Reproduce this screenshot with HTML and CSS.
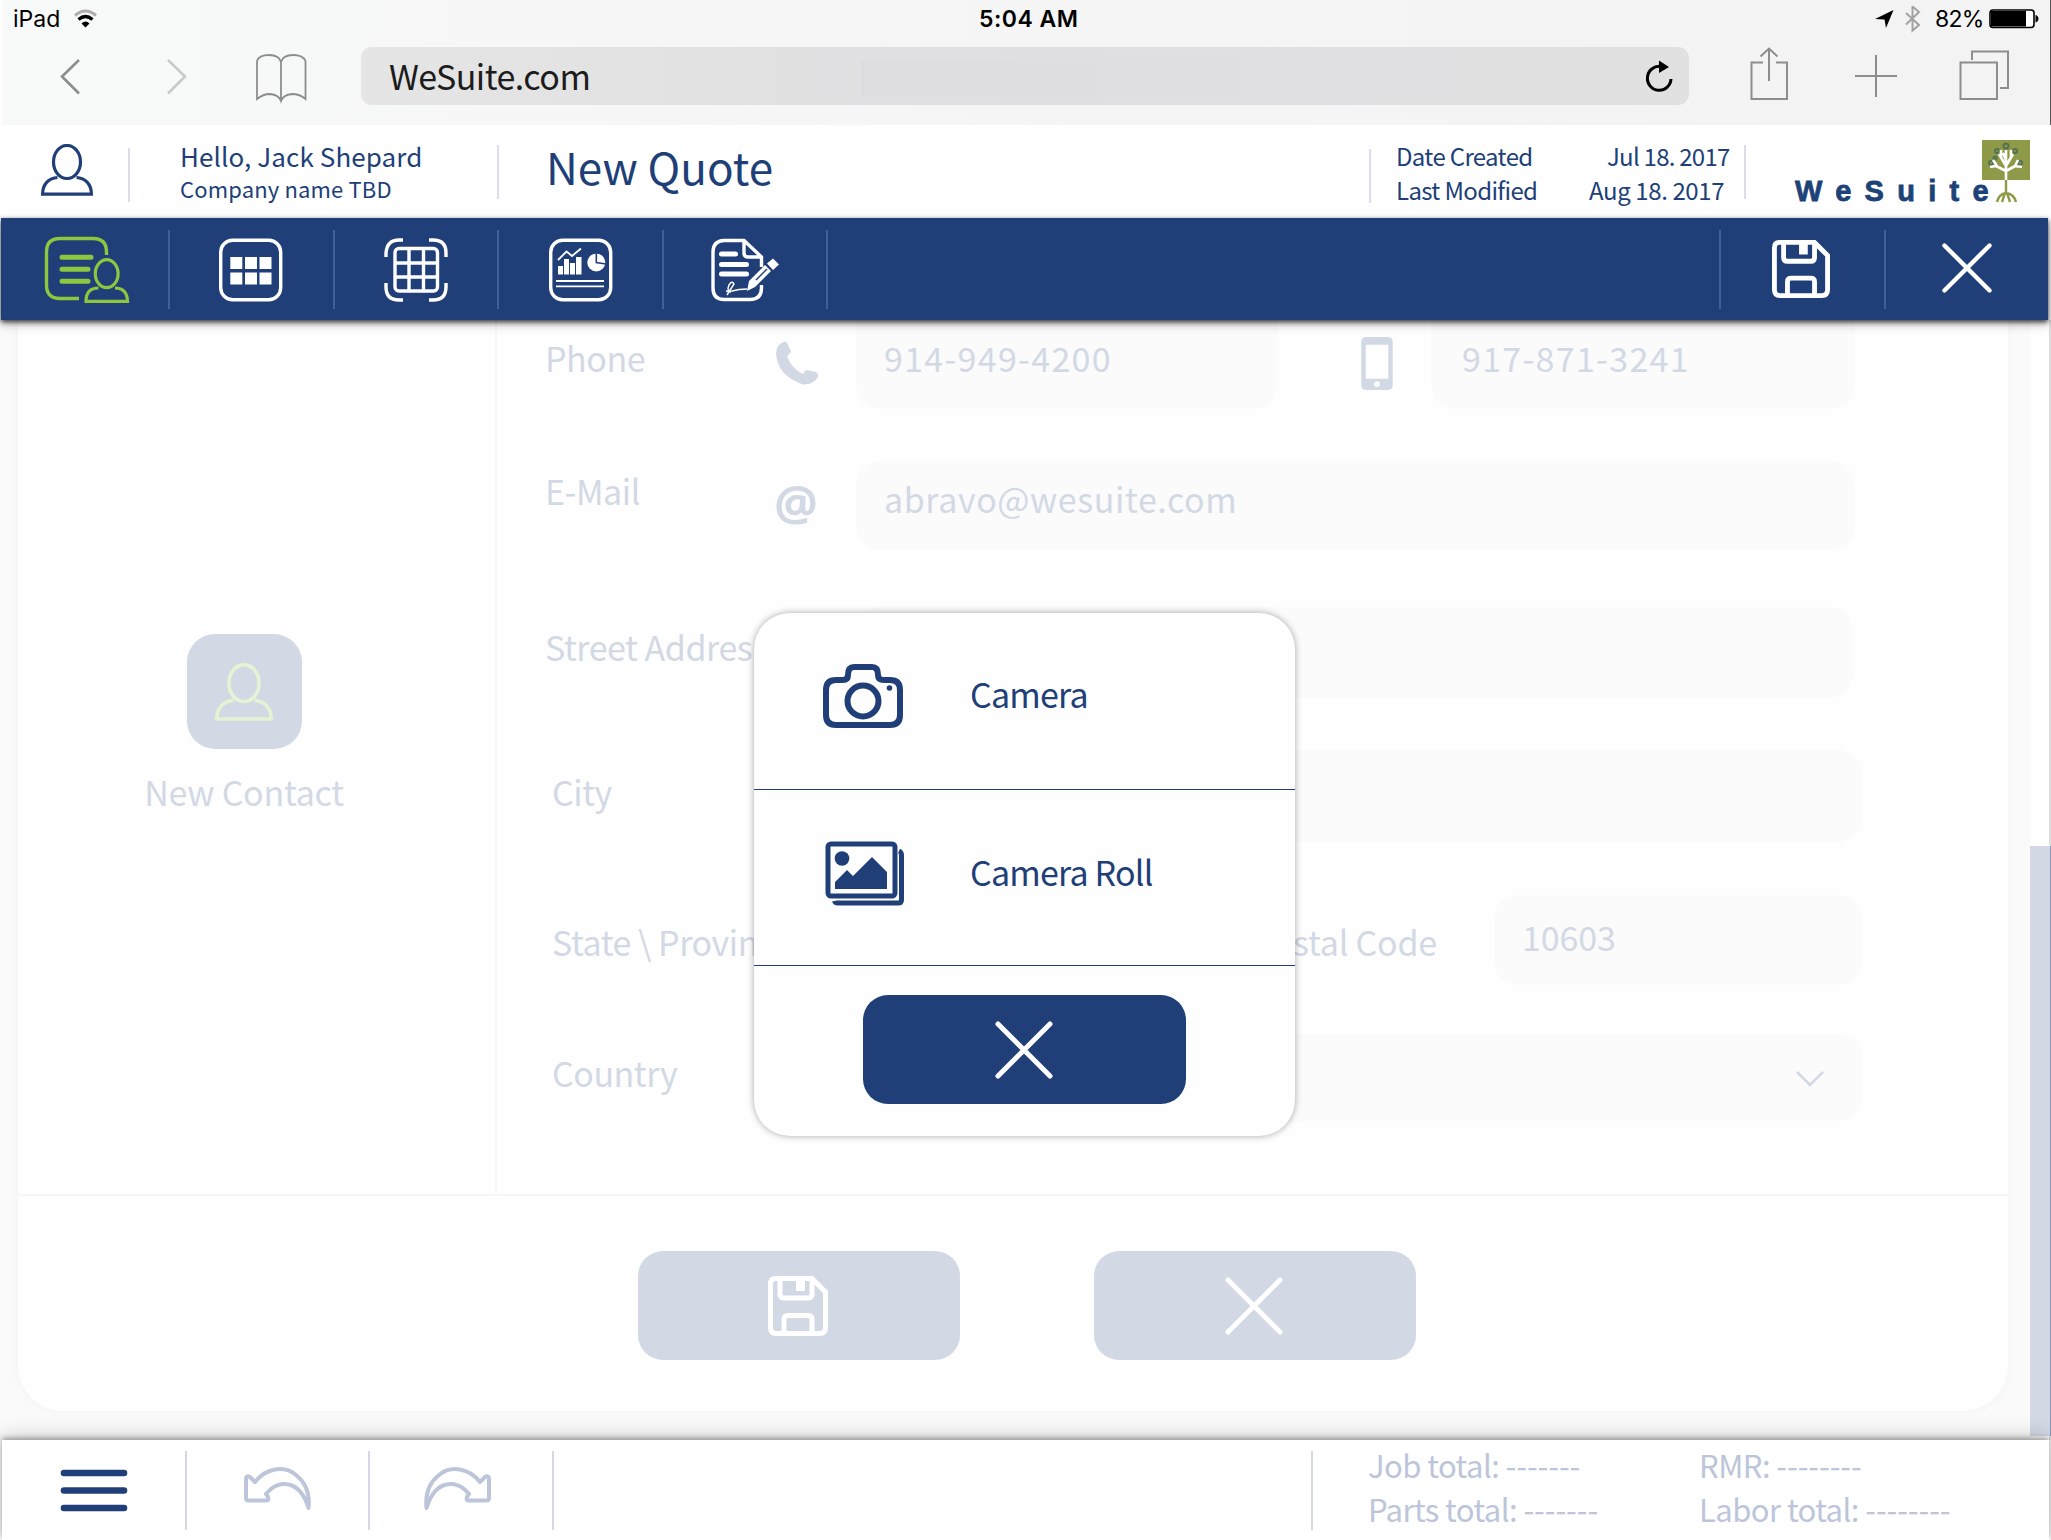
FILE: index.html
```html
<!DOCTYPE html>
<html lang="en">
<head>
<meta charset="utf-8">
<title>WeSuite - New Quote</title>
<link rel="stylesheet" href="styles.css">
</head>
<body>
<svg class="defs" width="0" height="0">
  <symbol id="person" viewBox="0 0 52 52">
    <ellipse cx="26" cy="18" rx="13.5" ry="16.5"/>
    <path d="M16.5 33.5C8 34 1.6 40 1.6 50.2H50.4C50.4 40 44 34 35.500 33.500"/>
  </symbol>
  <symbol id="save" viewBox="0 0 60 60">
    <path d="M7.500 2.500H44L57.500 16V51.500Q57.500 57.500 51.500 57.500H8.500Q2.500 57.500 2.500 51.500V8Q2.500 2.500 7.500 2.500Z"/>
    <path d="M12 3V18Q12 22 16 22H40Q44 22 44 18V3M16 57V43Q16 39.500 20 39.500H40Q44 39.500 44 43V57"/>
    <path class="solid" d="M28 4h9v11h-9z"/>
  </symbol>
  <symbol id="close" viewBox="0 0 60 60"><path d="M4 4L56 56M56 4L4 56"/></symbol>
</svg>

<header class="browser">
  <div class="status">
    <span class="device">iPad</span>
    <svg class="wifi" viewBox="73 8 25 20" width="25" height="20">
      <path d="M75 15.500Q85.500 6.500 96 15.500" stroke="#adadad" stroke-width="3" fill="none"/>
      <path d="M78.500 19.500Q85.500 13.500 92.500 19.500" stroke="#000" stroke-width="3.200" fill="none"/>
      <path d="M81.500 23.500Q85.500 19.500 89.500 23.500L85.500 27.500Z"/>
    </svg>
    <span class="clock">5:04 AM</span>
    <svg class="locate" viewBox="1874 6 48 28" width="48" height="28">
      <path d="M1875 19L1893.500 10L1886 28L1884.500 19.500Z"/>
      <path d="M1906 13L1919 25L1912.500 30.500V6.500L1919 12L1906 24.500" fill="none" stroke="#a3a3a3" stroke-width="2"/>
    </svg>
    <span class="percent">82%</span>
    <svg class="battery" viewBox="0 0 50 20" width="50" height="20">
      <rect x="1" y="1" width="44" height="17.500" rx="3" fill="#fff" stroke="#000" stroke-width="1.600"/>
      <path d="M2 2H37V17.500H2ZM46.500 6Q49.500 7 49.500 9.700T46.500 13.500Z"/>
    </svg>
  </div>
  <div class="address-row">
    <svg class="nav-icons" viewBox="58 50 252 56" width="252" height="56">
      <path d="M79 60L62 76.500L79 93.500" stroke="#8d8d8d" stroke-width="2.600"/>
      <path d="M168 60L185 76.500L168 93.500" stroke="#c9c9c9" stroke-width="2.600"/>
      <path d="M281 101V62Q279 55 269 55Q259 55 257 61V99Q263 94 270 94Q279 95 281 101Q283 95 292 94Q300 94 305.500 99V61Q303 55 293 55Q283 55 281 62" stroke="#8d8d8d" stroke-width="1.800"/>
    </svg>
    <div class="address">
      <span class="url">WeSuite.com</span>
      <span class="tint"></span>
      <svg class="reload" viewBox="1644 58 30 34" width="30" height="34">
        <path d="M1661 65.500A11.800 12 0 1 0 1671 78" fill="none" stroke="#000" stroke-width="3"/>
        <path d="M1659 59.500L1669 66L1659 72Z"/>
      </svg>
    </div>
    <svg class="tab-icons" viewBox="1748 46 264 56" width="264" height="56">
      <path d="M1763 62.500H1751.500V99H1787V62.500H1776M1769 81V49M1760.500 56.500L1769 48.500L1777.500 56.500M1855 76H1897M1876 55V97M1960.500 62.500H1997V99H1960.500ZM1972 60V51.500H2008V88H2000"/>
    </svg>
  </div>
</header>

<section class="account">
  <svg class="line-icon me"><use href="#person"/></svg>
  <i class="rule r1"></i>
  <div class="hello"><div class="name">Hello, Jack Shepard</div><div class="company">Company name TBD</div></div>
  <i class="rule r2"></i>
  <h1>New Quote</h1>
  <i class="rule r3"></i>
  <dl class="dates">
    <dt>Date Created</dt><dd class="jul">Jul 18. 2017</dd>
    <dt class="lm">Last Modified</dt><dd class="aug">Aug 18. 2017</dd>
  </dl>
  <i class="rule r4"></i>
  <div class="logo">
    <span>WeSuite</span>
    <svg viewBox="1982 140 48 63" width="48" height="63">
      <path fill="#8f9a48" d="M1982 140h48v40h-48z"/>
      <g fill="none" stroke="#53724f" stroke-width="2"><circle cx="2006" cy="146" r="2.500"/><circle cx="1997" cy="151" r="2"/><circle cx="2015" cy="151" r="2"/><circle cx="1991" cy="163" r="2"/><circle cx="2020" cy="163" r="2"/><circle cx="1995" cy="158" r="1.500"/></g>
      <path d="M2006 180V150M2006 171L1996 166M2006 166L1999 154M2006 171L2017 165M2006 166L2013 154M1996 166L1990 167M1997 166L1993 160M2015 166L2022 167M2015 166L2018 160M2001 158L2001 150M2011 158L2011 150M2006 160L2003 153" fill="none" stroke="#fff" stroke-width="2.600"/>
      <path d="M2006 180V194M2006 193Q1999 194 1997 202M2006 193Q2014 194 2016 202M2005 193L2002 202M2007 193L2010 202" fill="none" stroke="#8f9a48" stroke-width="2.400"/>
    </svg>
  </div>
</section>

<nav class="toolbar">
  <a><svg viewBox="44 236 88 70" width="88" height="70">
    <g stroke="#8dc63f" fill="none">
      <path stroke-width="3.400" d="M106.500 256V253Q106.500 239.500 93 239.500H60Q46.500 239.500 46.500 253V286Q46.500 299.500 60 299.500H79"/>
      <path stroke-width="5" stroke-linecap="round" d="M62 258.300H91M62 270.300H88M62 282.300H88"/>
      <ellipse cx="106.700" cy="274.700" rx="14.500" ry="17" fill="#203f78" stroke="none"/>
      <ellipse stroke-width="3.200" cx="106.700" cy="274.700" rx="11.400" ry="14"/>
      <path stroke-width="3.200" d="M98.500 289Q86 289 86 302.300H127.500Q127 289 115 289"/>
    </g></svg></a>
  <a><svg viewBox="219 237 66 66" width="66" height="66">
    <rect x="221.700" y="240.300" width="60" height="59.500" rx="12"/>
    <path class="solid" d="M231.300 257h12v12h-12zM246 257h12v12h-12zM260.500 257h12v12h-12zM231.300 272.500h12v12h-12zM246 272.500h12v12h-12zM260.500 272.500h12v12h-12z"/></svg></a>
  <a><svg viewBox="383 237 66 68" width="66" height="68">
    <path d="M386 258V254Q387 241 399 241H403M429 241H433Q446 241 446 254V258M446 284V288Q446 301 433 301H429M403 301H399Q386 301 386 288V284"/>
    <rect x="395" y="249.500" width="42.500" height="42.500" rx="4"/>
    <path d="M409 250V292M423.500 250V292M395 264H437M395 278H437"/></svg></a>
  <a><svg viewBox="547 237 67 66" width="67" height="66">
    <rect x="550.700" y="240.300" width="60" height="59.500" rx="12"/>
    <path class="solid" d="M558 266h5v8.500h-5zM564 259h5v15.500h-5zM570 263h5v11.500h-5zM576 257h5.500v17.500h-5.500z"/>
    <path stroke-width="1.800" d="M558 260L566.500 251.500L572 256L581 248.500M556 281H604M556 286.300H604"/>
    <circle class="solid" cx="596.300" cy="262.500" r="9"/><path class="cut" stroke-width="1.600" d="M596.300 253V262.500L606 264"/></svg></a>
  <a><svg viewBox="709 237 72 66" width="72" height="66">
    <path d="M761.500 267V257L744 240.500H724Q713 241 713 252V288Q713 299.500 724 299.500H750Q761.500 299.500 761.500 288V285M744 241V253Q744 257 748 257H761"/>
    <path stroke-width="5" stroke-linecap="round" d="M721.500 254H735.500M721.500 264.500H746.500M721.500 274H746.500"/>
    <path class="solid" d="M747 291L749 281L765 265L771 271L755 287ZM767 263.500L773 258.500L779 264.500L773 270Z"/>
    <path class="cut" stroke-width="1.400" d="M756 280L767 269"/>
    <path stroke-width="1.500" d="M727 295L734 284Q732 280 729 285Q726 292 732 291Q739 289 747 289M726 291L731 292"/></svg></a>
  <span class="spacer"></span>
  <a class="right"><svg class="tb-save"><use href="#save"/></svg></a>
  <a class="right"><svg class="tb-close"><use href="#close"/></svg></a>
</nav>

<main>
  <div class="card">
    <div class="upper">
      <aside>
        <div class="avatar"><svg class="line-icon"><use href="#person"/></svg></div>
        <span class="new-contact">New Contact</span>
      </aside>
      <div class="form">
        <div class="row phone">
          <label>Phone</label>
          <span class="icon"><svg viewBox="776 341 44 44" width="44" height="44"><path d="M785 341.500Q776 344 776 354Q778 376 803 384.500Q813 385 818 377Q819 374 816 372L807 370Q805 370 803 374Q791 368 787 356Q791 353 791 351L787 343Q786 341 785 341.500Z"/></svg></span>
          <div class="field number home">914-949-4200</div>
          <span class="icon mobile"><svg viewBox="0 0 32 54" width="32" height="53"><path fill-rule="evenodd" d="M5 0H27Q32 0 32 5V49Q32 54 27 54H5Q0 54 0 49V5Q0 0 5 0ZM4.500 8V42.500H27.500V8ZM16 45A3 3 0 1 0 16 51A3 3 0 1 0 16 45Z"/></svg></span>
          <div class="field number cell">917-871-3241</div>
        </div>
        <div class="row email">
          <label>E-Mail</label><span class="icon at">@</span>
          <div class="field">abravo@wesuite.com</div>
        </div>
        <div class="row street"><label>Street Address</label><div class="field"></div></div>
        <div class="row city"><label>City</label><div class="field"></div></div>
        <div class="row state"><label>State \ Province</label><div class="field short"></div><label class="postal">Postal Code</label><div class="field zip">10603</div></div>
        <div class="row country"><label>Country</label><div class="field"><svg viewBox="0 0 28 16" width="28" height="16"><path d="M1 1L14 14L27 1" fill="none" stroke="#d2d9e5" stroke-width="2.600"/></svg></div></div>
      </div>
    </div>
    <div class="actions">
      <button class="pale"><svg class="glyph"><use href="#save"/></svg></button>
      <button class="pale"><svg class="glyph"><use href="#close"/></svg></button>
    </div>
  </div>
  <div class="track"><div class="thumb"></div></div>
</main>

<footer>
  <div class="tool menu"><svg viewBox="0 0 68 46" width="68" height="46"><path d="M4 5H64M4 22.500H64M4 40H64" stroke="#203f78" stroke-width="6.600" stroke-linecap="round"/></svg></div>
  <div class="tool undo"><svg class="arrow" viewBox="0 0 68 44" width="68" height="44"><path d="M2 12Q2 8 6 10L11 15C22 1 40-2 52 8C61 15 66 26 64.500 41C60 26 52 16 38 17C30 18 26 22 22 27Q27 33 22 33.500H5Q2 33.500 2 31Z"/></svg></div>
  <div class="tool redo"><svg class="arrow flip" viewBox="0 0 68 44" width="68" height="44"><path d="M2 12Q2 8 6 10L11 15C22 1 40-2 52 8C61 15 66 26 64.500 41C60 26 52 16 38 17C30 18 26 22 22 27Q27 33 22 33.500H5Q2 33.500 2 31Z"/></svg></div>
  <div class="totals">
    <span>Job total: <b>-------</b></span><span>RMR: <b>--------</b></span>
    <span>Parts total: <b>-------</b></span><span>Labor total: <b>--------</b></span>
  </div>
</footer>

<div class="modal">
  <div class="option"><svg viewBox="822 663 82 66" width="82" height="66" fill="none" stroke="#203f78" stroke-width="6">
      <path d="M836 680H843Q848 680 848 675Q848 667 854 667H872Q878 667 878 675Q878 680 884 680H890Q900 680 900 690V715Q900 725 890 725H836Q826 725 826 715V690Q826 680 836 680Z"/>
      <circle cx="863" cy="701" r="15.500"/><circle cx="889.500" cy="688" r="2.800" fill="#203f78" stroke="none"/></svg>
    <span>Camera</span></div>
  <div class="option roll"><svg viewBox="824 840 82 68" width="82" height="68" fill="#203f78">
      <rect x="828" y="844" width="67" height="52" rx="3" fill="none" stroke="#203f78" stroke-width="5"/>
      <circle cx="842" cy="858.500" r="7.300"/><path d="M835 889V882L847 870L853 876L872 857L887 872V889Z"/>
      <path d="M899 851Q901.500 852 901.500 855V900Q901.500 903 898 903H838Q835 903 834.500 901" fill="none" stroke="#203f78" stroke-width="5"/></svg>
    <span>Camera Roll</span></div>
  <div class="dismiss"><button><svg class="glyph"><use href="#close"/></svg></button></div>
</div>
</body>
</html>
```
FILE: styles.css
```css
* { box-sizing: border-box; }
body {
  margin: 0; width: 2051px; height: 1540px; overflow: hidden; position: relative;
  display: flex; flex-direction: column; background: #fefefe; color: #203f78;
  font-family: "Noto Sans CJK SC", "Open Sans", sans-serif;
}
.defs { position: absolute; }
a, i, svg, button { flex: none; display: block; }
button { border: 0; padding: 0; display: flex; align-items: center; justify-content: center; }
span, label, h1, dt, dd, .name, .company { white-space: nowrap; }

/* browser chrome */
.browser { height: 125px; flex: none; background: linear-gradient(90deg, #f8f9f9, #f5f5f5 50%, #f3f3f3); border-left: 3px solid #fdfdfd; border-right: 1px solid #555; }
.status { height: 40px; padding-left: 10px; display: flex; align-items: flex-start; font: 23px/28px Inter, sans-serif; color: #000; }
.status span { margin-top: 5px; }
.device { width: 60px; }
.wifi { margin-top: 8px; }
.clock { margin-left: 881px; width: 895px; font-weight: 600; letter-spacing: .5px; }
.locate { margin-top: 6px; }
.percent { margin-left: 13px; width: 54px; letter-spacing: -.8px; }
.battery { margin-top: 9px; }
.address-row { display: flex; padding: 7px 0 0 55px; }
.nav-icons { margin-top: 3px; fill: none; }
.address { width: 1328px; height: 58px; margin-left: 51px; border-radius: 11px; background: linear-gradient(90deg, #e5e5e5, #dfdfe1 50%, #e1e1e2); display: flex; align-items: center; padding: 0 15px 0 28px; }
.url { width: 472px; font-size: 34px; line-height: 34px; letter-spacing: -.5px; color: #1c1c1c; }
.tint { width: 380px; height: 36px; margin-top: 4px; background: linear-gradient(90deg, #dddde0, #dfdfe1); margin-right: auto; }
.tab-icons { margin: -1px 0 0 59px; fill: none; stroke: #8d8d8d; stroke-width: 2; }

/* account strip */
.account { height: 93px; flex: none; background: #fff; display: flex; align-items: flex-start; }
.line-icon { fill: none; stroke: currentColor; stroke-width: 3.2px; }
.me { width: 52px; height: 52px; margin: 19px 0 0 41px; }
.rule { width: 2px; height: 54px; background: #dadeea; }
.r1 { margin: 23px 50px 0 35px; }
.hello { width: 317px; padding-top: 17px; }
.name { font-size: 26px; line-height: 28px; height: 32px; letter-spacing: .1px; }
.company { font-size: 22px; line-height: 28px; letter-spacing: .15px; }
.r2 { margin-top: 20px; }
h1 { margin: 19px 0 0 47px; width: 823px; font-size: 44px; line-height: 44px; font-weight: 400; }
.r3 { margin-top: 24px; }
.dates { margin: 16px 0 0 25px; width: 348px; display: grid; grid-template-columns: 191px 1fr; grid-auto-rows: 34px; font-size: 24px; line-height: 30px; letter-spacing: -.65px; }
.dates dt, .dates dd { margin: 0; }
.jul { padding-left: 20px; letter-spacing: -.75px; }
.aug { padding-left: 2px; letter-spacing: -.4px; }
.r4 { margin-top: 20px; }
.logo { margin: 15px 0 0 49px; display: flex; }
.logo span { width: 187px; margin-top: 35px; font: 700 29px/32px "Liberation Sans", sans-serif; letter-spacing: 13.300px; color: #1c4278; -webkit-text-stroke: .8px #1c4278; }

/* toolbar */
.toolbar { height: 102px; flex: none; margin: 0 3px 0 1px; background: #203f78; display: flex; padding-top: 12px; position: relative; z-index: 2; box-shadow: 0 2px 5px rgba(0,0,0,.75), 0 5px 10px rgba(0,0,0,.2); }
.toolbar a { width: 164.600px; height: 79px; border-right: 2px solid #40609a; display: flex; align-items: center; justify-content: center; fill: none; stroke: #fff; color: #fff; stroke-width: 3.400px; }
.toolbar a:first-child { width: 169px; padding-left: 6px; }
.toolbar a svg { margin-top: 1px; }
.solid { fill: currentColor; stroke: none; }
.cut { stroke: #203f78; }
.spacer { flex: 1; }
.toolbar a.right { width: 164.500px; border-right: 0; border-left: 2px solid #40609a; stroke-width: 5px; }
.toolbar .tb-save { width: 58px; height: 58px; margin: -2px 2px 0 0; }
.toolbar .tb-close { width: 52px; height: 52px; margin-top: -3px; stroke-linecap: round; }

/* quote form, dimmed behind the dialog */
main { height: 1120px; flex: none; display: flex; background: #fafafa; color: #d2d9e5; }
.card { width: 1990px; height: 1091px; margin-left: 18px; background: #fefefe; border-radius: 0 0 45px 45px; box-shadow: 0 0 10px rgba(0,0,0,.035); }
.upper { height: 876px; display: flex; border-bottom: 2px solid #f6f6f6; }
aside { width: 479px; border-right: 2px solid #f7f7f7; display: flex; flex-direction: column; align-items: center; padding: 314px 25px 0 0; }
.avatar { width: 115px; height: 115px; border-radius: 28px; background: #d2d9e5; color: #e6f2d4; display: flex; align-items: center; justify-content: center; }
.avatar svg { width: 58px; height: 58px; }
.new-contact { margin-top: 26px; font-size: 34px; line-height: 34px; letter-spacing: -.25px; }
.row { display: flex; height: 89px; font-size: 34px; line-height: 34px; padding-left: 48px; }
label { width: 311px; padding-top: 21px; letter-spacing: -.45px; }
.phone label, .email label { width: 231px; }
.icon { width: 80px; padding-top: 21px; fill: #d2d9e5; }
.field { background: #fbfbfb; border-radius: 24px; padding: 21px 0 0 28px; width: 999px; letter-spacing: .6px; }
.number { letter-spacing: 1.300px; }
.phone .field { border-radius: 0 0 24px 24px; }
.field.home { width: 421px; }
.field.cell { width: 424px; padding-left: 31px; }
.mobile { width: 154px; padding: 17px 0 0 84px; }
.email { margin-top: 52px; }
.email label { padding-top: 13px; }
.at { font: 700 49px/44px "Open Sans", sans-serif; padding-top: 19px; text-indent: -2px; }
.street { margin-top: 57px; height: 91px; }
.street label { padding-top: 23px; }
.street .field { width: 997px; }
.city, .state, .country { padding-left: 55px; }
.city label, .state label, .country label { width: 304px; }
.city { margin-top: 52px; height: 92px; }
.city label { padding-top: 25px; }
.city .field, .country .field { width: 1006px; }
.state { margin-top: 53px; height: 90px; }
.state label { padding-top: 30px; }
.state .short { width: 340px; }
.state label.postal { width: 298px; padding-right: 57px; text-align: right; letter-spacing: -.2px; }
.state .zip { width: 368px; padding-top: 25px; letter-spacing: -.1px; }
.country { margin-top: 49px; height: 87px; }
.country label { padding-top: 22px; }
.country .field { padding: 37px 38px 0 0; }
.country .field svg { margin-left: auto; }
.actions { display: flex; gap: 134px; padding: 55px 0 0 620px; }
.pale { width: 322px; height: 109px; border-radius: 25px; background: #d2d9e5; color: #fff; }
.pale .glyph { margin-right: 2px; }
.glyph { width: 60px; height: 60px; fill: none; stroke: #fff; color: #fff; stroke-width: 5px; stroke-linecap: round; }
.track { width: 21px; margin-left: 22px; padding-top: 526px; background: linear-gradient(90deg, #fefefe, #fefefe 90%, #ddd 91%); }
.thumb { height: 590px; background: #d2d9e5; border-right: 1px solid #8496b8; }

/* footer */
footer { height: 100px; flex: none; margin: 0 2px 0 2px; background: #fff; display: flex; padding-top: 11px; position: relative; z-index: 1; color: #bcc5da; box-shadow: 0 -2px 5px rgba(0,0,0,.32), 0 -5px 18px rgba(0,0,0,.16); }
.tool { height: 79px; width: 183px; border-right: 2px solid #d5d9e5; display: flex; justify-content: center; align-items: center; }
.tool.menu { width: 185px; }
.tool.undo { padding: 0 0 3px 1px; }
.arrow { fill: none; stroke: #bcc5da; stroke-width: 4px; stroke-linejoin: round; }
.flip { transform: scaleX(-1); }
.tool.redo { width: 184px; padding: 0 8px 3px 0; }
.totals { margin-left: 757px; height: 79px; border-left: 2px solid #d5d9e5; padding: 0 0 0 55px; display: grid; grid-template-columns: 331px 350px; grid-auto-rows: 44px; font-size: 31px; line-height: 28px; letter-spacing: -.55px; }
.totals b { font-weight: 400; letter-spacing: -.1px; }

/* photo source dialog */
.modal { position: absolute; z-index: 3; left: 754px; top: 613px; width: 541px; height: 523px; border-radius: 36px; background: #fefefe; box-shadow: 0 0 7px rgba(0,0,0,.35); }
.option { height: 177px; border-bottom: 1.500px solid #203f78; display: flex; padding: 50px 0 0 68px; }
.option.roll { height: 176px; padding: 50px 0 0 70px; }
.option span { margin: 14px 0 0 66px; font-size: 34px; line-height: 34px; letter-spacing: -.8px; }
.option.roll span { margin: 15px 0 0 64px; }
.dismiss { display: flex; justify-content: center; padding: 29px 1px 0 0; }
.dismiss button { width: 323px; height: 109px; border-radius: 25px; background: #203f78; }
```
